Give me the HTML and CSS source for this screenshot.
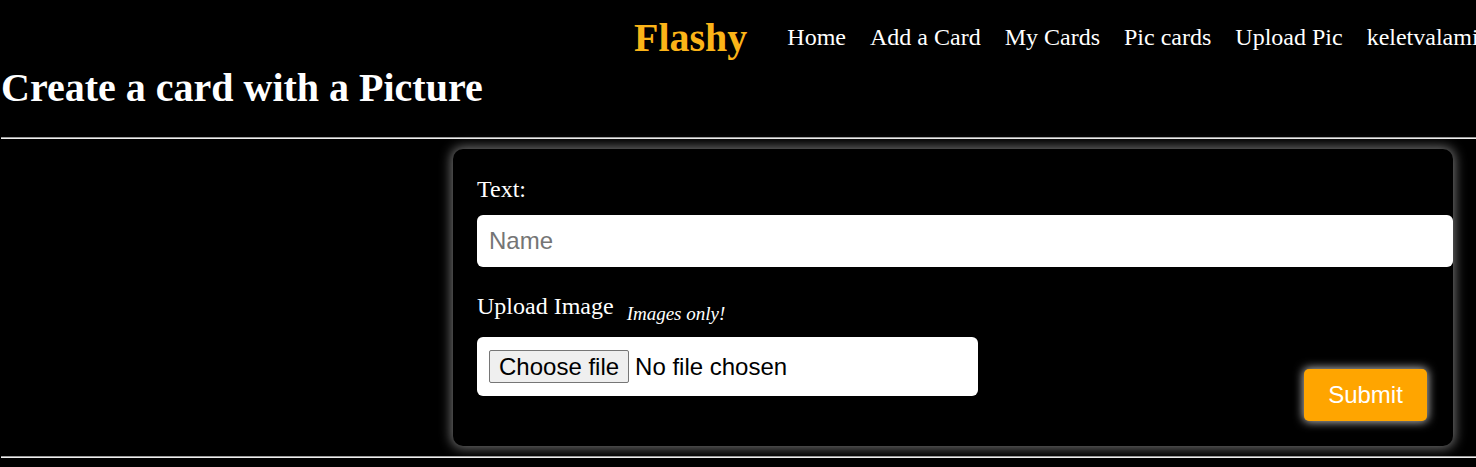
FILE: index.html
```html
<!DOCTYPE html>
<html>
<head>
<meta charset="utf-8">
<title>Flashy - Create a card with a Picture</title>
<link rel="stylesheet" href="styles.css">
</head>
<body>
<div class="page">
  <header class="topbar">
    <span class="brand">Flashy</span>
    <nav class="nav">
      <a href="#">Home</a>
      <a href="#">Add a Card</a>
      <a href="#">My Cards</a>
      <a href="#">Pic cards</a>
      <a href="#">Upload Pic</a>
      <a href="#">keletvalami</a>
    </nav>
  </header>
  <h1 class="title">Create a card with a Picture</h1>
  <hr class="rule">
  <form class="card">
    <label class="label" for="name">Text:</label>
    <input class="text-input" id="name" type="text" placeholder="Name">
    <div class="bottom-row">
      <div class="upload-group">
        <div class="upload-label">
          <span>Upload Image</span>
          <span class="hint">Images only!</span>
        </div>
        <div class="file-box">
          <span class="file-btn">Choose file</span>
          <span class="file-status">No file chosen</span>
        </div>
      </div>
      <button class="submit" type="button">Submit</button>
    </div>
  </form>
  <hr class="rule rule-bottom">
</div>
</body>
</html>
```
FILE: styles.css
```css
html, body {
  margin: 0;
  padding: 0;
  background: #000;
  overflow: hidden;
}
body {
  font-family: "Liberation Serif", "Times New Roman", serif;
  color: #fff;
}
.page {
  padding-left: 1px;
}
.topbar {
  display: flex;
  align-items: center;
  padding: 14px 0 0 633px;
  white-space: nowrap;
}
.brand {
  font-size: 40px;
  font-weight: bold;
  color: #fbb418;
  margin-right: 40px;
}
.nav {
  display: flex;
  gap: 24px;
}
.nav a {
  color: #fff;
  text-decoration: none;
  font-size: 24px;
}
.title {
  font-size: 40px;
  font-weight: bold;
  margin: 4px 0 26px 0;
  line-height: 46px;
}
.rule {
  margin: 0;
  height: 0;
  border: 0;
  border-top: 1px solid #9a9a9a;
  border-bottom: 1px solid #eeeeee;
}
.rule-bottom {
  margin-top: 10px;
}
.card {
  display: block;
  box-sizing: border-box;
  width: 1000px;
  margin: 10px 0 0 452px;
  padding: 27px 26px 25px 24px;
  background: #000;
  border-radius: 10px;
  box-shadow: 0 0 12px 2px rgba(210, 210, 210, 0.55);
}
.label {
  display: block;
  font-size: 24px;
}
.text-input {
  display: block;
  box-sizing: border-box;
  width: calc(100% + 26px);
  height: 52px;
  margin-top: 12px;
  padding: 0 12px;
  border: 0;
  border-radius: 6px;
  background: #fff;
  font-family: "Liberation Sans", Arial, sans-serif;
  font-size: 24px;
  color: #000;
  outline: none;
}
.text-input::placeholder {
  color: #757575;
}
.bottom-row {
  display: flex;
  justify-content: space-between;
  align-items: flex-end;
  margin-top: 26px;
}
.upload-group {
  margin-bottom: 25px;
}
.upload-label {
  display: flex;
  align-items: flex-start;
  font-size: 24px;
}
.hint {
  font-size: 19px;
  font-style: italic;
  margin: 10px 0 0 13px;
}
.file-box {
  box-sizing: border-box;
  width: 501px;
  height: 59px;
  margin-top: 12px;
  padding: 0 12px;
  display: flex;
  align-items: center;
  background: #fff;
  border-radius: 6px;
  font-family: "Liberation Sans", Arial, sans-serif;
  font-size: 24px;
  color: #000;
}
.file-btn {
  box-sizing: border-box;
  height: 33px;
  line-height: 31px;
  padding: 0 9px;
  background: #efefef;
  border: 1px solid #767676;
  border-radius: 2px;
  margin-right: 6px;
}
.submit {
  box-sizing: border-box;
  width: 123px;
  height: 52px;
  padding: 0;
  border: 0;
  border-radius: 5px;
  background: #ffa500;
  color: #fff;
  font-family: "Liberation Sans", Arial, sans-serif;
  font-size: 24px;
  box-shadow: 0 0 10px 1px rgba(255, 255, 255, 0.75);
}
```
